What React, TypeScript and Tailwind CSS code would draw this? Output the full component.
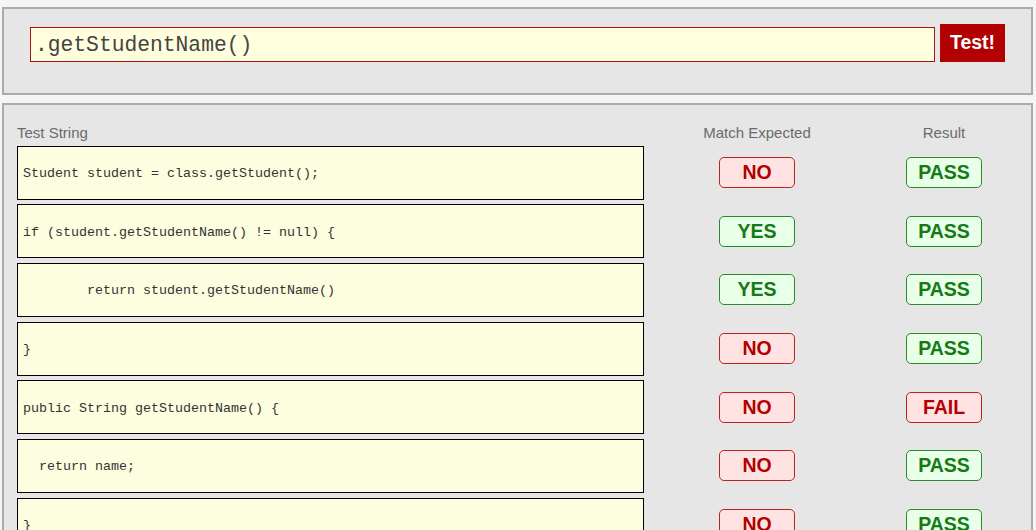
const rows = [
  { text: 'Student student = class.getStudent();', expected: 'NO', result: 'PASS' },
  { text: 'if (student.getStudentName() != null) {', expected: 'YES', result: 'PASS' },
  { text: '        return student.getStudentName()', expected: 'YES', result: 'PASS' },
  { text: '}', expected: 'NO', result: 'PASS' },
  { text: 'public String getStudentName() {', expected: 'NO', result: 'FAIL' },
  { text: '  return name;', expected: 'NO', result: 'PASS' },
  { text: '}', expected: 'NO', result: 'PASS' },
]

function Badge({ label }: { label: string }) {
  const good = label === 'YES' || label === 'PASS'
  return (
    <span
      className={
        good
          ? 'flex h-[31px] w-[76px] items-center justify-center rounded-[5px] border border-[#2a8a2a] bg-[#e8ffe8] text-[19.5px] font-bold text-[#157a15]'
          : 'flex h-[31px] w-[76px] items-center justify-center rounded-[5px] border border-[#bb2222] bg-[#ffe2e2] text-[19.5px] font-bold text-[#b30000]'
      }
    >
      {label}
    </span>
  )
}

export default function App() {
  return (
    <div className="min-h-screen bg-[#f5f5f5] px-[2px] pt-[7px] font-['Liberation_Sans',Arial,sans-serif]">
      {/* regex input */}
      <div className="h-[88px] w-[1031px] border-2 border-[#ababab] bg-[#e6e6e6] pl-[26px] pr-[26px] pt-[15px]">
        <div className="flex items-end gap-[5px]">
          <input
            defaultValue=".getStudentName()"
            className="h-[35px] flex-1 border border-[#aa1111] bg-[#ffffde] px-[4px] font-['Liberation_Mono',monospace] text-[21.3px] text-[#444] outline-none"
          />
          <button className="h-[38px] w-[65px] bg-[#b30000] text-[19.5px] font-bold text-white">
            Test!
          </button>
        </div>
      </div>

      {/* tests */}
      <div className="mt-[8px] w-[1031px] border-2 border-[#ababab] bg-[#e6e6e6] px-[13px] pt-[19px] pb-[20px]">
        <div className="grid grid-cols-[627px_226px_148px] gap-y-[4.67px]">
          <div className="h-[17px] text-[15px] leading-[17px] text-[#6b6b6b]">Test String</div>
          <div className="h-[17px] text-center text-[15px] leading-[17px] text-[#6b6b6b]">Match Expected</div>
          <div className="h-[17px] text-center text-[15px] leading-[17px] text-[#6b6b6b]">Result</div>

          {rows.map((r, i) => (
            <div key={i} className="contents">
              <div className="flex h-[54px] items-center border border-black bg-[#fdfde0] px-[5px] pt-[3px] font-['Liberation_Mono',monospace] text-[13.33px] whitespace-pre text-[#333]">
                {r.text}
              </div>
              <div className="flex items-center justify-center">
                <Badge label={r.expected} />
              </div>
              <div className="flex items-center justify-center">
                <Badge label={r.result} />
              </div>
            </div>
          ))}
        </div>
      </div>
    </div>
  )
}
